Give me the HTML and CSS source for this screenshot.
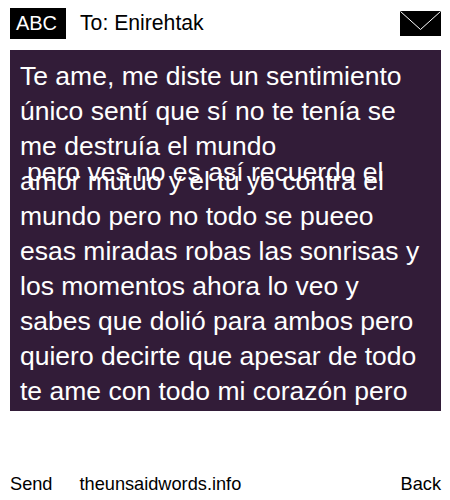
FILE: index.html
```html
<!DOCTYPE html>
<html lang="en">
<head>
    <meta charset="UTF-8">
    <meta name="viewport" content="width=device-width, initial-scale=1.0">
    <title>The Unsaid Words</title>
    <link rel="stylesheet" href="styles.css">
</head>
<body>
    <div class="header">
        <div class="abc-btn">ABC</div>
        <div class="to-line">To: Enirehtak</div>
        <svg class="mail-icon" viewBox="0 0 41 25" width="41" height="25">
            <rect width="41" height="25" fill="#000"/>
            <path d="M0.5 0.5 L20.5 18.5 L40.5 0.5" fill="none" stroke="#fff" stroke-width="1"/>
        </svg>
    </div>

    <div class="message">
        <p>Te ame, me diste un sentimiento único sentí que sí no te tenía se me destruía el mundo</p>
        <span class="overlap-line">pero ves no es así recuerdo el</span>
        <p>amor mutuo y el tú yo contra el mundo pero no todo se pueeo esas miradas robas las sonrisas y los momentos ahora lo veo y sabes que dolió para ambos pero quiero decirte que apesar de todo te ame con todo mi corazón pero</p>
    </div>

    <div class="footer">
        <a class="send-link">Send</a>
        <a class="site-link">theunsaidwords.info</a>
        <a class="back-link">Back</a>
    </div>
</body>
</html>
```

FILE: styles.css
```css
body {
    font-family: "Liberation Sans", Arial, sans-serif;
    margin: 0;
    padding: 0;
    background-color: #fff;
    color: #000;
    width: 450px;
    height: 500px;
    overflow: hidden;
}

.header {
    display: flex;
    align-items: center;
    height: 30px;
    padding: 8px 9px 12px 10px;
}

.abc-btn {
    box-sizing: border-box;
    width: 56px;
    height: 31px;
    padding-right: 3px;
    line-height: 31px;
    background-color: #000;
    color: #fff;
    font-size: 20px;
    text-align: center;
}

.to-line {
    margin-left: 14px;
    font-size: 21.2px;
    flex: 1;
}

.mail-icon {
    display: block;
}

.message {
    position: relative;
    box-sizing: border-box;
    width: 431px;
    height: 361px;
    margin-left: 10px;
    padding: 9px 10px 0;
    background-color: #321c38;
    color: #fff;
    font-size: 26.5px;
    line-height: 35px;
    overflow: hidden;
}

.message p {
    margin: 0;
}

/* this line sits on top of the next paragraph */
.overlap-line {
    position: absolute;
    top: 105px;
    left: 17px;
    white-space: nowrap;
}

.footer {
    display: flex;
    align-items: center;
    margin-top: 60px;
    padding: 0 9px 0 10px;
    font-size: 18.2px;
    line-height: 26px;
}

.site-link {
    margin-left: 27px;
    flex: 1;
}
```
